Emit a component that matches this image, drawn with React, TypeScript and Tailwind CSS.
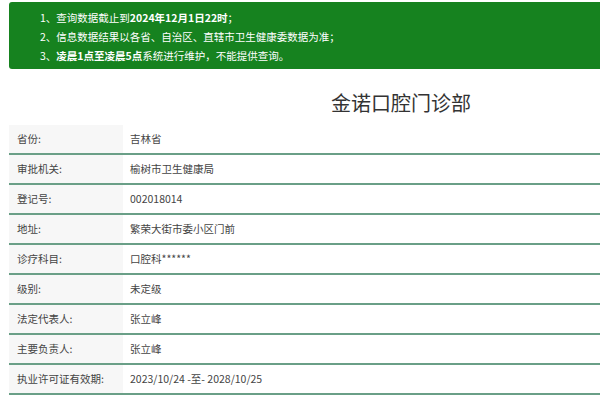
const rows: [string, string][] = [
  ["省份:", "吉林省"],
  ["审批机关:", "榆树市卫生健康局"],
  ["登记号:", "002018014"],
  ["地址:", "繁荣大街市委小区门前"],
  ["诊疗科目:", "口腔科******"],
  ["级别:", "未定级"],
  ["法定代表人:", "张立峰"],
  ["主要负责人:", "张立峰"],
  ["执业许可证有效期:", "2023/10/24 -至- 2028/10/25"],
];

export default function App() {
  return (
    <div
      className="w-[600px] h-[400px] overflow-hidden bg-white text-[#333]"
      style={{ fontFamily: '"Noto Sans CJK SC", "Noto Sans", sans-serif' }}
    >
      <div className="w-[784px] ml-[9px] pt-[2px]">
        {/* notice banner */}
        <div className="h-[67px] rounded-[3px] bg-[#16821f] pl-[31px] pt-[6px] text-[10.5px] leading-[19px] text-white">
          <p>1、查询数据截止到<b>2024年12月1日22时</b>；</p>
          <p>2、信息数据结果以各省、自治区、直辖市卫生健康委数据为准；</p>
          <p>3、<b>凌晨1点至凌晨5点</b>系统进行维护，不能提供查询。</p>
        </div>

        {/* title */}
        <h1 className="h-[56px] pt-[12px] flex items-center justify-center text-[20px] text-[#333]">
          金诺口腔门诊部
        </h1>

        {/* detail table */}
        <div>
          {rows.map(([label, value]) => (
            <div key={label} className="flex h-[30px] border-b-2 border-[#6a9f87] text-[10.5px]">
              <div className="w-[114px] bg-[#f7f7f7] pl-[8px] flex items-center text-[#444]">{label}</div>
              <div className="flex-1 pl-[7px] flex items-center text-[#444]">{value}</div>
            </div>
          ))}
        </div>
      </div>
    </div>
  );
}
